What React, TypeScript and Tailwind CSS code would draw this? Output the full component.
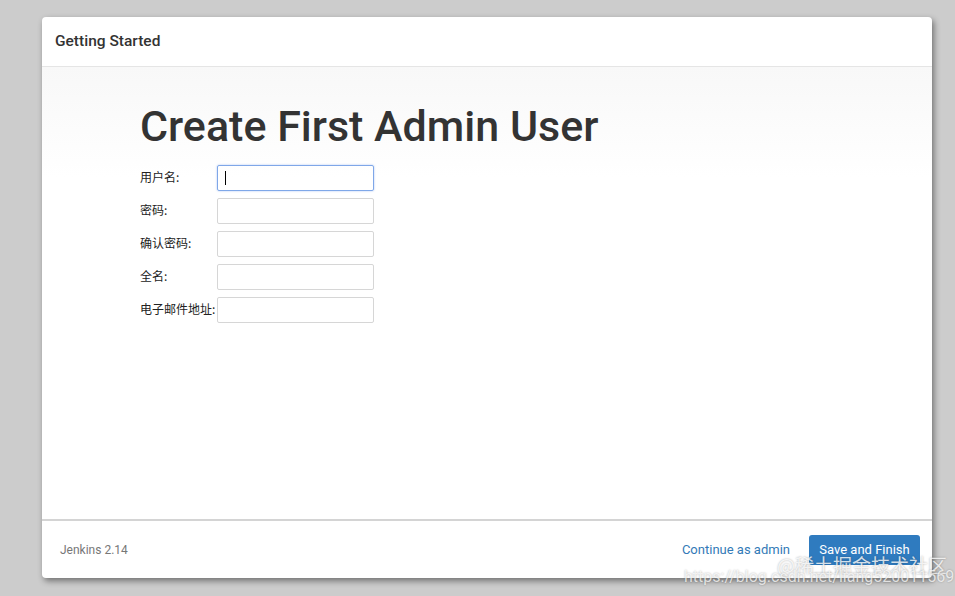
import React from "react";

const fields = ["用户名:", "密码:", "确认密码:", "全名:", "电子邮件地址:"];

export default function App() {
  return (
    <div
      className="relative h-[596px] w-[955px] overflow-hidden bg-[#cccccc] pl-[42px] pt-[17px]"
      style={{ fontFamily: "Roboto, 'Noto Sans CJK SC', sans-serif" }}
    >
      <div className="flex h-[561px] w-[890px] flex-col rounded-[4px] bg-white shadow-[2px_3px_6px_rgba(0,0,0,0.45)]">
        {/* header */}
        <div className="flex h-[50px] items-center border-b border-[#e5e5e5] px-[13px]">
          <h4 className="text-[15.5px] font-medium text-[#333]">Getting Started</h4>
        </div>

        {/* body */}
        <div className="flex-1 bg-[linear-gradient(to_bottom,#f8f8f8,#ffffff_110px)] pl-[98px] pt-[35px]">
          <h1 className="text-[43px] font-medium leading-[48px] text-[#333]">
            Create First Admin User
          </h1>
          <div className="mt-[15px] flex flex-col gap-[7px]">
            {fields.map((label, i) => (
              <div key={label} className="flex items-center">
                <label
                  className="-mt-[3px] w-[77px] text-[12px] text-[#222]"
                  style={{ fontFamily: "'Noto Sans CJK SC', sans-serif" }}
                >
                  {label}
                </label>
                <div className="relative">
                  <input
                    type={i === 1 || i === 2 ? "password" : "text"}
                    className={
                      i === 0
                        ? "h-[26px] w-[157px] rounded-[2px] border border-[#7fa7e8] px-2 text-[12px] shadow-[0_0_2px_rgba(102,150,233,0.6)] outline-none"
                        : "h-[26px] w-[157px] rounded-[2px] border border-[#d6d6d6] px-2 text-[12px] outline-none"
                    }
                  />
                  {i === 0 && (
                    <span className="absolute left-[8px] top-[6px] h-[14px] w-px bg-black" />
                  )}
                </div>
              </div>
            ))}
          </div>
        </div>

        {/* footer */}
        <div className="flex h-[59px] items-center border-t-2 border-[#d4d4d4] pl-[18px] pr-[12px]">
          <span className="text-[12px] text-[#777]">Jenkins 2.14</span>
          <div className="ml-auto flex items-center gap-[19px]">
            <a className="text-[13px] text-[#337ab7]">Continue as admin</a>
            <button className="h-[30px] w-[111px] rounded-[3px] bg-[#2f7bbf] text-[13px] text-white">
              Save and Finish
            </button>
          </div>
        </div>
      </div>

      {/* watermark */}
      <div
        className="absolute left-[777px] top-[553px] text-[19px] leading-[24px] text-white/80 [text-shadow:0_0_2px_rgba(0,0,0,0.35)]"
        style={{ fontFamily: "'Noto Sans CJK SC', sans-serif" }}
      >
        @稀土掘金技术社区
      </div>
      <div className="absolute left-[684px] top-[567px] text-[16px] leading-[20px] text-white/75 [text-shadow:0_0_2px_rgba(0,0,0,0.3)]">
        https://blog.csdn.net/liang520011569
      </div>
    </div>
  );
}
